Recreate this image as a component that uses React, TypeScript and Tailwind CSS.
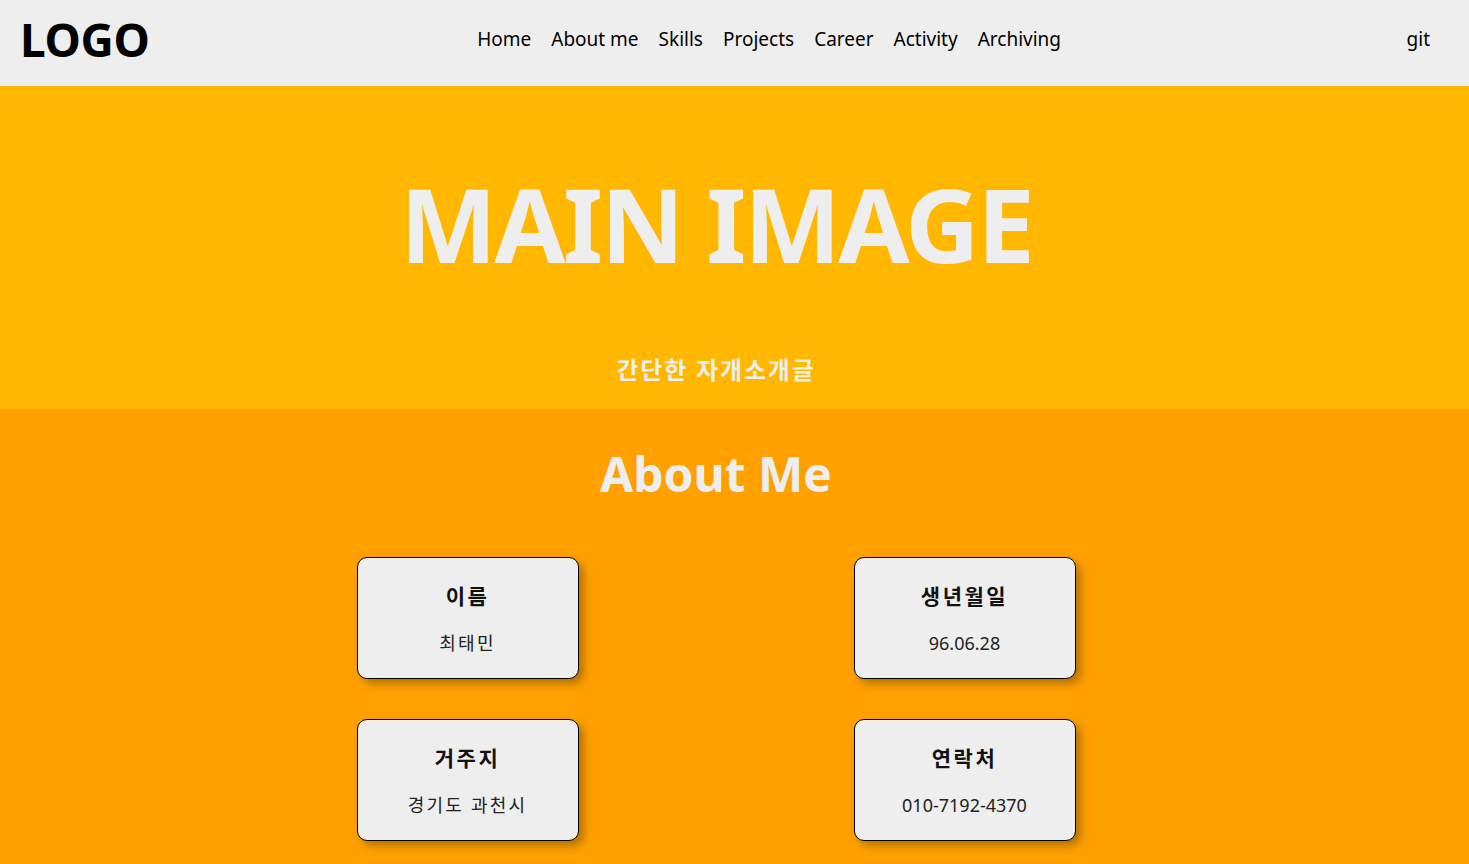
const cards = [
  { title: "이름", value: "최태민", ko: true },
  { title: "생년월일", value: "96.06.28", ko: false },
  { title: "거주지", value: "경기도 과천시", ko: true },
  { title: "연락처", value: "010-7192-4370", ko: false },
];

const menus = ["Home", "About me", "Skills", "Projects", "Career", "Activity", "Archiving"];

export default function App() {
  return (
    <div className="min-h-screen bg-[#ffa000] font-['Noto_Sans','Noto_Sans_CJK_KR',sans-serif]">
      {/* Header */}
      <header className="h-[86px] bg-[#eeeeee] flex items-center justify-between pl-[20px] pr-[39px] pb-[8px]">
        <div className="text-[46px] font-bold text-black leading-none tracking-[-0.3px]">LOGO</div>
        <nav className="flex items-center gap-[20px] text-[19px] text-black mr-[18px]">
          {menus.map((m) => (
            <span key={m}>{m}</span>
          ))}
        </nav>
        <div className="text-[19px] text-black">git</div>
      </header>

      {/* Hero */}
      <section className="h-[323px] bg-[#ffb700] flex flex-col items-center pr-[37px]">
        <h1 className="mt-[86px] text-[103px] font-bold leading-none tracking-[-2.5px] text-[#eeeeee]">MAIN IMAGE</h1>
        <p className="mt-[77px] text-[24px] font-bold tracking-[1.8px] text-[#eeeeee]">간단한 자개소개글</p>
      </section>

      {/* About */}
      <section className="bg-[#ffa000] flex flex-col items-center pr-[37px] pb-[24px]">
        <h2 className="mt-[41px] text-[48px] font-bold text-[#eeeeee] leading-none">About Me</h2>
        <div className="mt-[59px] grid grid-cols-[222px_222px] gap-x-[275px] gap-y-[40px]">
          {cards.map((c) => (
            <div
              key={c.title}
              className="h-[122px] bg-[#eeeeee] border border-black rounded-[10px] shadow-[5px_5px_8px_rgba(0,0,0,0.28)] flex flex-col items-center justify-center pt-[2px]"
            >
              <div className="text-[21px] font-bold tracking-[2.5px] text-[#111]">{c.title}</div>
              <div className={`mt-[17px] text-[18px] text-[#222] ${c.ko ? "tracking-[2.2px]" : ""}`}>{c.value}</div>
            </div>
          ))}
        </div>
      </section>
    </div>
  );
}
